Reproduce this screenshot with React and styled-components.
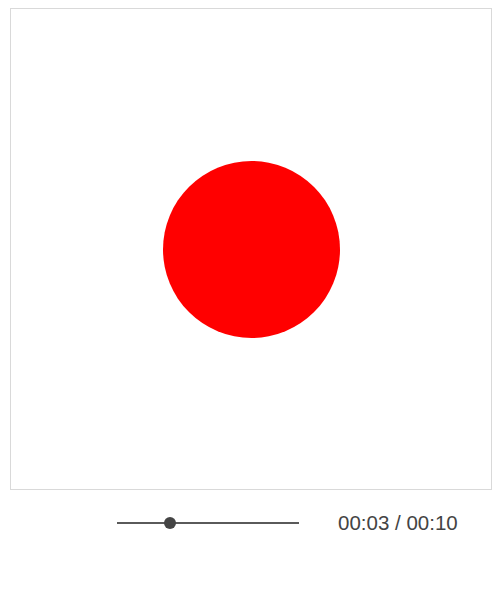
import styled, { createGlobalStyle } from 'styled-components';

const GlobalStyle = createGlobalStyle`
  body {
    margin: 0;
    padding: 8px 9px 0 10px;
    background: #fff;
    font-family: "Liberation Sans", Arial, sans-serif;
  }
`;

const Stage = styled.div`
  width: 480px;
  height: 480px;
  border: 1px solid #d9d9d9;
  display: flex;
  align-items: center;
  justify-content: center;
`;

const Ball = styled.div`
  width: 177px;
  height: 177px;
  border-radius: 50%;
  background: #ff0000;
`;

const Controls = styled.div`
  display: flex;
  align-items: center;
  height: 66px;
  padding-left: 107px;
  gap: 39px;
`;

const Track = styled.div`
  position: relative;
  width: 182px;
  height: 2px;
  background: #5a5a5a;
`;

const Thumb = styled.div`
  position: absolute;
  top: 50%;
  width: 12px;
  height: 12px;
  margin: -6px 0 0 -6px;
  border-radius: 50%;
  background: #444;
`;

const Time = styled.span`
  font-size: 20.5px;
  color: #444;
  line-height: 1;
`;

const fmt = (s) => `00:${String(s).padStart(2, '0')}`;

function App() {
  const current = 3;
  const total = 10;
  return (
    <>
      <GlobalStyle />
      <Stage>
        <Ball />
      </Stage>
      <Controls>
        <Track>
          <Thumb style={{ left: `${(current / total) * 100 - 1}%` }} />
        </Track>
        <Time>
          {fmt(current)} / {fmt(total)}
        </Time>
      </Controls>
    </>
  );
}

export default App;
